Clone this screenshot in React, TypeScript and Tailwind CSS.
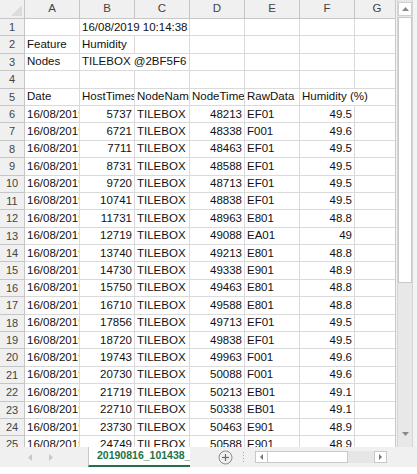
import React from "react";

type Row = { a?: string; b?: string; c?: string; d?: string; e?: string; f?: string; bSpan?: boolean; fSpan?: boolean; bRight?: boolean; dRight?: boolean; fRight?: boolean };

const data: [string, string, string, string][] = [
  ["5737", "48213", "EF01", "49.5"],
  ["6721", "48338", "F001", "49.6"],
  ["7711", "48463", "EF01", "49.5"],
  ["8731", "48588", "EF01", "49.5"],
  ["9720", "48713", "EF01", "49.5"],
  ["10741", "48838", "EF01", "49.5"],
  ["11731", "48963", "E801", "48.8"],
  ["12719", "49088", "EA01", "49"],
  ["13740", "49213", "E801", "48.8"],
  ["14730", "49338", "E901", "48.9"],
  ["15750", "49463", "E801", "48.8"],
  ["16710", "49588", "E801", "48.8"],
  ["17856", "49713", "EF01", "49.5"],
  ["18720", "49838", "EF01", "49.5"],
  ["19743", "49963", "F001", "49.6"],
  ["20730", "50088", "F001", "49.6"],
  ["21719", "50213", "EB01", "49.1"],
  ["22710", "50338", "EB01", "49.1"],
  ["23730", "50463", "E901", "48.9"],
  ["24749", "50588", "E901", "48.9"],
];

const rows: Row[] = [
  { b: "16/08/2019 10:14:38", bSpan: true },
  { a: "Feature", b: "Humidity" },
  { a: "Nodes", b: "TILEBOX @2BF5F6", bSpan: true },
  {},
  { a: "Date", b: "HostTimestamp", c: "NodeName", d: "NodeTimestamp", e: "RawData", f: "Humidity (%)", fSpan: true },
  ...data.map(([b, d, e, f]) => ({ a: "16/08/2019", b, c: "TILEBOX @2BF5F6", d, e, f, bRight: true, dRight: true, fRight: true })),
];

const cellBase = "h-[17.4px] border-r border-b border-[#dadada] overflow-hidden whitespace-nowrap px-[2px] flex items-center text-[#111]";

function Cell({ text, right, span }: { text?: string; right?: boolean; span?: boolean }) {
  return (
    <div className={`${cellBase} ${right ? "justify-end" : "justify-start"} ${span ? "col-span-2" : ""}`}>
      {text ?? ""}
    </div>
  );
}

export default function App() {
  const cols = ["A", "B", "C", "D", "E", "F", "G"];
  return (
    <div className="w-[417px] h-[474px] bg-white flex flex-col font-['Liberation_Sans',Arial,sans-serif] text-[11.5px] overflow-hidden">
      <div className="flex h-[447px]">
        <div className="w-[396px] h-[447px] overflow-hidden border-r border-[#c8c8c8]">
          <div className="grid grid-cols-[25px_55px_55px_55px_55px_55px_55px_45px]">
            {/* header */}
            <div className="h-[19px] bg-[#f0f0f0] border-r border-b border-[#c6c6c6] relative">
              <svg className="absolute right-[2px] bottom-[2px]" width="11" height="11" viewBox="0 0 11 11">
                <polygon points="11,0 11,11 0,11" fill="#dcdcdc" />
              </svg>
            </div>
            {cols.map((c) => (
              <div key={c} className="h-[19px] bg-[#f0f0f0] border-r border-b border-[#c6c6c6] flex items-center justify-center text-[#444] text-[11.5px]">
                {c}
              </div>
            ))}
            {rows.map((r, i) => (
              <React.Fragment key={i}>
                <div className="h-[17.4px] bg-[#f0f0f0] border-r border-b border-[#c6c6c6] flex items-center justify-center text-[#444] text-[11px]">
                  {i + 1}
                </div>
                <Cell text={r.a} />
                <Cell text={r.b} right={r.bRight} span={r.bSpan} />
                {!r.bSpan && <Cell text={r.c} />}
                <Cell text={r.d} right={r.dRight} />
                <Cell text={r.e} />
                <Cell text={r.f} right={r.fRight} span={r.fSpan} />
                {!r.fSpan && <Cell />}
              </React.Fragment>
            ))}
          </div>
        </div>
        {/* vertical scrollbar */}
        <div className="w-[21px] h-[447px] bg-[#f3f3f3] flex">
          <div className="ml-[1px] w-[16px] h-[447px] bg-[#e8e8e8] border-x border-[#d4d4d4] flex flex-col items-center">
            <div className="w-[14px] h-[14px] mt-[2px] bg-white border border-[#d0d0d0] flex items-center justify-center">
              <svg width="7" height="4" viewBox="0 0 7 4"><polygon points="0,4 7,4 3.5,0" fill="#8a8a8a" /></svg>
            </div>
            <div className="w-[14px] h-[266px] mt-[1px] bg-white border border-[#c8c8c8]" />
            <div className="flex-1" />
            <div className="w-[14px] h-[14px] mb-[6px] bg-[#e8e8e8] flex items-center justify-center">
              <svg width="7" height="4" viewBox="0 0 7 4"><polygon points="0,0 7,0 3.5,4" fill="#8a8a8a" /></svg>
            </div>
          </div>
        </div>
      </div>
      {/* tab bar */}
      <div className="h-[20px] bg-[#f0f0f0] flex items-stretch">
        <div className="w-[88px] flex items-center">
          <svg className="ml-[28px]" width="4" height="7" viewBox="0 0 4 7"><polygon points="4,0 4,7 0,3.5" fill="#c8c8c8" /></svg>
          <svg className="ml-[17px]" width="4" height="7" viewBox="0 0 4 7"><polygon points="0,0 0,7 4,3.5" fill="#c8c8c8" /></svg>
        </div>
        <div className="w-[102px] bg-white border-l border-[#c8c8c8] border-b-2 border-b-[#217346] overflow-hidden whitespace-nowrap flex items-center pl-[8px] text-[#217346] font-bold text-[10.5px]">
          20190816_101438_
        </div>
        <div className="w-[28px]" />
        <div className="flex items-center">
          <svg width="15" height="15" viewBox="0 0 15 15">
            <circle cx="7.5" cy="7.5" r="6.5" fill="none" stroke="#8a8a8a" strokeWidth="1" />
            <line x1="7.5" y1="4" x2="7.5" y2="11" stroke="#6a6a6a" strokeWidth="1.2" />
            <line x1="4" y1="7.5" x2="11" y2="7.5" stroke="#6a6a6a" strokeWidth="1.2" />
          </svg>
        </div>
        <div className="w-[10px]" />
        <div className="flex flex-col justify-center gap-[2px]">
          <div className="w-[1px] h-[1px] bg-[#aaa]" />
          <div className="w-[1px] h-[1px] bg-[#aaa]" />
          <div className="w-[1px] h-[1px] bg-[#aaa]" />
          <div className="w-[1px] h-[1px] bg-[#aaa]" />
        </div>
        <div className="w-[11px]" />
        <div className="flex items-center">
          <div className="w-[132px] h-[12px] bg-[#e6e6e6] flex items-stretch">
            <div className="w-[13px] bg-white border border-[#c8c8c8] flex items-center justify-center">
              <svg width="3" height="6" viewBox="0 0 3 6"><polygon points="3,0 3,6 0,3" fill="#777" /></svg>
            </div>
            <div className="w-[80px] bg-white border-y border-r border-[#c8c8c8]" />
            <div className="flex-1" />
            <div className="w-[13px] bg-white border border-[#c8c8c8] flex items-center justify-center">
              <svg width="3" height="6" viewBox="0 0 3 6"><polygon points="0,0 0,6 3,3" fill="#777" /></svg>
            </div>
          </div>
        </div>
      </div>
      <div className="flex-1 bg-white" />
    </div>
  );
}
